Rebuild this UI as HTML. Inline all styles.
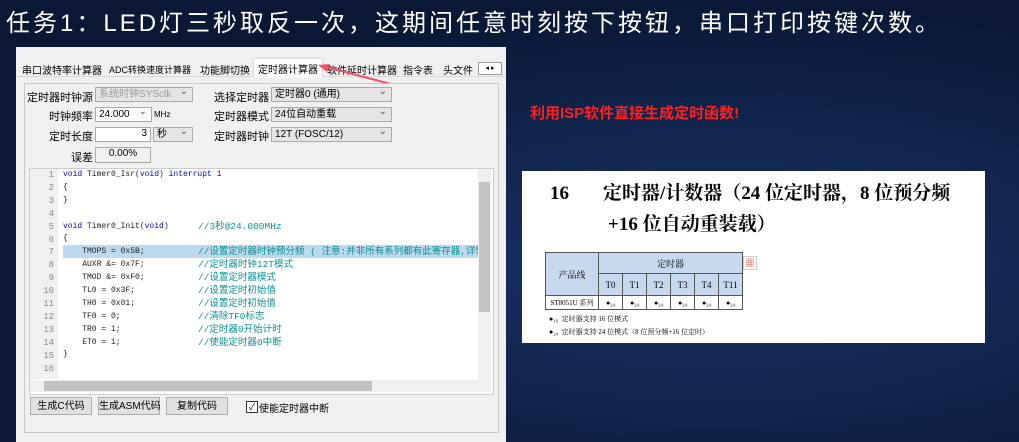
<!DOCTYPE html><html><head><meta charset="utf-8"><style>
body{margin:0;width:1019px;height:442px;overflow:hidden;background:radial-gradient(ellipse at 70% 60%,#1a3466,#0a1836 70%);font-family:"Liberation Sans","Noto Sans CJK SC",sans-serif;position:relative}
.a{position:absolute}
.t{font-size:11px;color:#000;white-space:nowrap}
.r{text-align:right;width:80px}
.tab{position:absolute;top:62px;font-size:10px;white-space:nowrap}
.sel{position:absolute;height:15px;border:1px solid #aaa;background:#e5e5e5;font-size:10px;line-height:14px;padding-left:3px;box-sizing:border-box;white-space:nowrap}
.sel:after{content:"⌄";position:absolute;right:4px;top:-3px;color:#555}
.code{font-family:"Liberation Mono","Noto Sans CJK SC",monospace;font-size:8px;line-height:12.9px;white-space:pre}
.lines{font-family:"Liberation Mono","Noto Sans CJK SC",monospace;font-size:8px;line-height:12.9px;white-space:normal}
.lines div{position:relative;height:12.9px;white-space:pre}
.c{position:absolute;left:135px;top:0;color:#089090;font-size:9.5px;font-family:"Liberation Mono","Noto Sans CJK SC",monospace}
.k{color:#0000e0}
.btn{position:absolute;top:397px;height:18px;border:1px solid #adadad;background:#e1e1e1;font-size:10px;line-height:17px;text-align:center;box-sizing:border-box;white-space:nowrap}
</style></head><body>
<div class="a" style="left:6px;top:3px;color:#fff;font-size:24px;letter-spacing:3px;white-space:nowrap">任务1：LED灯三秒取反一次，这期间任意时刻按下按钮，串口打印按键次数。</div>
<div class="a" style="left:16px;top:47px;width:490px;height:395px;background:#f0f0f0"></div>
<div class="a" style="left:16px;top:60px;width:490px;height:16px;border-bottom:1px solid #d9d9d9"></div>
<div class="tab" style="left:22px">串口波特率计算器</div>
<div class="tab" style="left:109px;font-size:9px;top:63px">ADC转换速度计算器</div>
<div class="tab" style="left:200px">功能脚切换</div>
<div class="a" style="left:253px;top:58px;width:68px;height:19px;background:#fff;border:1px solid #d9d9d9;border-bottom:none"></div>
<div class="tab" style="left:258px;top:61px">定时器计算器</div>
<div class="tab" style="left:327px">软件延时计算器</div>
<div class="tab" style="left:403px">指令表</div>
<div class="tab" style="left:443px">头文件</div>
<div class="a" style="left:478px;top:62px;width:22px;height:11px;border:1px solid #999;background:#fff;font-size:7px;line-height:11px;text-align:center">◂ ▸</div>
<svg class="a" style="left:318px;top:62px" width="100" height="30"><line x1="4" y1="4" x2="92" y2="27" stroke="#f0506a" stroke-width="2"/><polygon points="0,3 12,2 9,10" fill="#f0506a"/></svg>
<div class="a" style="left:24px;top:83px;width:473px;height:348px;border:1px solid #c8c8c8;background:#f0f0f0"></div>
<div class="a t r" style="left:13px;top:89px">定时器时钟源</div><div class="sel" style="left:95px;top:87px;width:98px;color:#999">系统时钟SYSclk</div>
<div class="a t r" style="left:13px;top:108px">时钟频率</div><div class="sel" style="left:95px;top:107px;width:57px;background:#fff">24.000</div><div class="a t" style="left:154px;top:110px;font-size:8px">MHz</div>
<div class="a t r" style="left:13px;top:128px">定时长度</div><div class="a" style="left:95px;top:127px;width:56px;height:15px;background:#fff;border:1px solid #aaa;font-size:10px;text-align:right;box-sizing:border-box;padding-right:3px">3</div><div class="sel" style="left:153px;top:127px;width:40px">秒</div>
<div class="a t r" style="left:13px;top:149px">误差</div><div class="a" style="left:95px;top:147px;width:56px;height:16px;border:1px solid #aaa;font-size:10px;text-align:center;box-sizing:border-box">0.00%</div>
<div class="a t r" style="left:189px;top:89px">选择定时器</div><div class="sel" style="left:271px;top:87px;width:121px">定时器0 (通用)</div>
<div class="a t r" style="left:189px;top:108px">定时器模式</div><div class="sel" style="left:271px;top:107px;width:121px">24位自动重载</div>
<div class="a t r" style="left:189px;top:128px">定时器时钟</div><div class="sel" style="left:271px;top:127px;width:121px">12T (FOSC/12)</div>
<div class="a" style="left:29px;top:168px;width:463px;height:225px;background:#fff;border:1px solid #ccc"></div>
<div class="a" style="left:30px;top:169px;width:28px;height:210px;background:#f0f0f0"></div>
<div class="a" style="left:63px;top:245px;width:415px;height:13px;background:#bcd9ef"></div>
<div class="a code" style="left:30px;top:169px;width:24px;text-align:right;color:#888;font-size:9px">1
2
3
4
5
6
7
8
9
10
11
12
13
14
15
16</div>
<div class="a lines" style="left:63px;top:169px;width:415px;height:210px;overflow:hidden;color:#222"><div><span class="k">void</span> Timer0_Isr(<span class="k">void</span>) <span class="k">interrupt</span> 1</div><div>{</div><div>}</div><div></div><div><span class="k">void</span> Timer0_Init(<span class="k">void</span>)<span class="c">//3秒@24.000MHz</span></div><div>{</div><div>    TMOPS = 0x5B;<span class="c">//设置定时器时钟预分频 ( 注意:并非所有系列都有此寄存器,详情</span></div><div>    AUXR &amp;= 0x7F;<span class="c">//定时器时钟12T模式</span></div><div>    TMOD &amp;= 0xF0;<span class="c">//设置定时器模式</span></div><div>    TL0 = 0x3F;<span class="c">//设置定时初始值</span></div><div>    TH0 = 0x01;<span class="c">//设置定时初始值</span></div><div>    TF0 = 0;<span class="c">//清除TF0标志</span></div><div>    TR0 = 1;<span class="c">//定时器0开始计时</span></div><div>    ET0 = 1;<span class="c">//使能定时器0中断</span></div><div>}</div></div>
<div class="a" style="left:478px;top:169px;width:13px;height:211px;background:#f0f0f0"></div>
<div class="a" style="left:479px;top:182px;width:11px;height:130px;background:#c2c2c2"></div>
<div class="a" style="left:30px;top:380px;width:461px;height:12px;background:#f0f0f0"></div>
<div class="a" style="left:44px;top:381px;width:328px;height:10px;background:#c2c2c2"></div>
<div class="btn" style="left:30px;width:62px">生成C代码</div>
<div class="btn" style="left:98px;width:62px">生成ASM代码</div>
<div class="btn" style="left:166px;width:62px">复制代码</div>
<div class="a" style="left:246px;top:401px;width:10px;height:10px;border:1px solid #333;background:#fff;font-size:9px;line-height:10px;text-align:center">✓</div>
<div class="a t" style="left:259px;top:400px;font-size:10px">使能定时器中断</div>
<div class="a" style="left:530px;top:102px;color:#ff2020;font-size:15px;font-weight:bold;white-space:nowrap">利用ISP软件直接生成定时函数!</div>
<div class="a" style="left:522px;top:171px;width:463px;height:172px;background:#fff"></div>
<div class="a" style="left:550px;top:178px;font-family:'Liberation Serif','Noto Serif CJK SC',serif;font-weight:bold;font-size:19px;white-space:nowrap">16<span style="margin-left:34px">定时器/计数器（24 位定时器，8 位预分频</span></div>
<div class="a" style="left:608px;top:209px;font-family:'Liberation Serif','Noto Serif CJK SC',serif;font-weight:bold;font-size:19px;white-space:nowrap">+16 位自动重装载）</div>
<table class="a" style="left:545px;top:252px;border-collapse:collapse;font-family:'Liberation Serif','Noto Serif CJK SC',serif;font-size:9px;text-align:center">
<tr style="height:21px;background:#c7d9ef"><td rowspan="2" style="border:1px solid #555;width:50px">产品线</td><td colspan="6" style="border:1px solid #555">定时器</td></tr>
<tr style="height:22px;background:#c7d9ef"><td style="border:1px solid #555;width:21px">T0</td><td style="border:1px solid #555;width:21px">T1</td><td style="border:1px solid #555;width:21px">T2</td><td style="border:1px solid #555;width:21px">T3</td><td style="border:1px solid #555;width:21px">T4</td><td style="border:1px solid #555;width:21px">T11</td></tr>
<tr style="height:14px;font-size:7px"><td style="border:1px solid #555">ST8051U 系列</td><td style="border:1px solid #555">●₂₄</td><td style="border:1px solid #555">●₂₄</td><td style="border:1px solid #555">●₂₄</td><td style="border:1px solid #555">●₂₄</td><td style="border:1px solid #555">●₂₄</td><td style="border:1px solid #555">●₂₄</td></tr></table>
<div class="a" style="left:743px;top:256px;width:12px;height:12px;border:1px solid #ccc;font-size:9px;color:#c44;text-align:center;line-height:12px">▦</div>
<div class="a" style="left:549px;top:313px;font-size:7px;font-family:'Liberation Serif','Noto Serif CJK SC',serif;line-height:13px;white-space:nowrap">●₁₆ &nbsp;定时器支持 16 位模式<br>●₂₄ &nbsp;定时器支持 24 位模式（8 位预分频+16 位定时）</div>
</body></html>
